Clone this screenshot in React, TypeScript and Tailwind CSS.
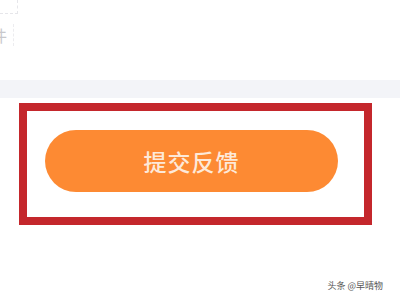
import React from "react";

export default function App() {
  return (
    <div
      className="relative w-[400px] h-[300px] bg-white overflow-hidden flex flex-col"
      style={{ fontFamily: '"Noto Sans CJK SC", "Noto Sans", sans-serif' }}
    >
      {/* faint top-left fragment */}
      <div className="h-[80px] relative">
        <div className="absolute left-0 top-0 w-[18px] h-[14px] border-r border-b border-dashed border-[#e6e6ea]" />
        <div className="absolute left-[-9px] top-[27px] text-[16px] leading-none text-[#c8c8cc]">件</div>
        <div className="absolute left-[13px] top-[24px] h-[22px] border-l border-dashed border-[#ececef]" />
      </div>
      <div className="h-[18px] bg-[#f3f4f8]" />
      <div className="h-[5px]" />
      <div className="ml-[19px] w-[353px] h-[122px] border-[8px] border-[#c4272c] pl-[18px] pt-[19px]">
        <button className="w-[293px] h-[62px] rounded-full bg-[#fd8a33] flex items-center justify-center text-[23px] font-medium text-[#fde9d9] leading-none tracking-[1px]">
          提交反馈
        </button>
      </div>
      <div className="flex-1 flex justify-end items-end pb-[10px] pr-[17px]">
        <span className="text-[9px] leading-none text-[#555]">头条 @早晴物</span>
      </div>
    </div>
  );
}
